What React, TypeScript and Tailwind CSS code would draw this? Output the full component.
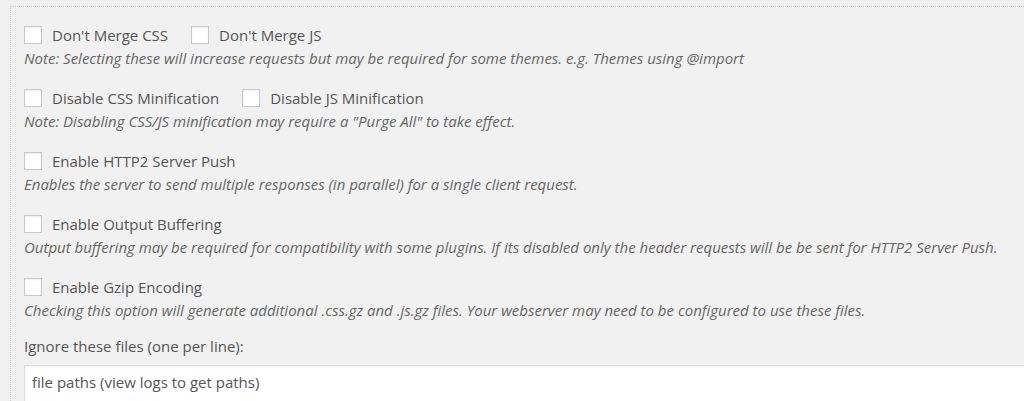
import React from 'react'

type Opcao = { rotulos: string[]; nota: string }

const OPCOES: Opcao[] = [
  {
    rotulos: ["Don't Merge CSS", "Don't Merge JS"],
    nota: 'Note: Selecting these will increase requests but may be required for some themes. e.g. Themes using @import',
  },
  {
    rotulos: ['Disable CSS Minification', 'Disable JS Minification'],
    nota: 'Note: Disabling CSS/JS minification may require a "Purge All" to take effect.',
  },
  {
    rotulos: ['Enable HTTP2 Server Push'],
    nota: 'Enables the server to send multiple responses (in parallel) for a single client request.',
  },
  {
    rotulos: ['Enable Output Buffering'],
    nota: 'Output buffering may be required for compatibility with some plugins. If its disabled only the header requests will be be sent for HTTP2 Server Push.',
  },
  {
    rotulos: ['Enable Gzip Encoding'],
    nota: 'Checking this option will generate additional .css.gz and .js.gz files. Your webserver may need to be configured to use these files.',
  },
]

function Caixa({ rotulo }: { rotulo: string }) {
  return (
    <label className="flex items-center mr-[23px]">
      <span className="w-[18px] h-[18px] bg-white border border-[#c5c8cc] shadow-[inset_0_1px_2px_rgba(0,0,0,0.07)]" />
      <span className="ml-[10px] text-[15px] text-[#555]">{rotulo}</span>
    </label>
  )
}

export default function App() {
  return (
    <div
      className="w-[1024px] h-[401px] overflow-hidden bg-[#f1f1f1] pt-[6px] pl-[10px]"
      style={{ fontFamily: '"Open Sans", "Noto Sans", sans-serif' }}
    >
      <div className="h-full border-t border-l border-dotted border-[#ccc] pl-[13px] pt-[17px] flex flex-col">
        <div className="flex flex-col gap-[17px]">
          {OPCOES.map((o, i) => (
            <div key={i}>
              <div className="flex items-center h-[22px]">
                {o.rotulos.map((r) => (
                  <Caixa key={r} rotulo={r} />
                ))}
              </div>
              <p className="italic text-[15px] leading-[24px] text-[#666] whitespace-nowrap">{o.nota}</p>
            </div>
          ))}
        </div>
        <p className="text-[15px] leading-[22px] text-[#555] mt-[13px]">Ignore these files (one per line):</p>
        <div className="mt-[8px] w-[1010px] h-[60px] shrink-0 bg-white border border-[#ddd] shadow-[inset_0_1px_2px_rgba(0,0,0,0.07)] pl-[7px] pt-[5px] text-[15px] text-[#555]">
          file paths (view logs to get paths)
        </div>
      </div>
    </div>
  )
}
